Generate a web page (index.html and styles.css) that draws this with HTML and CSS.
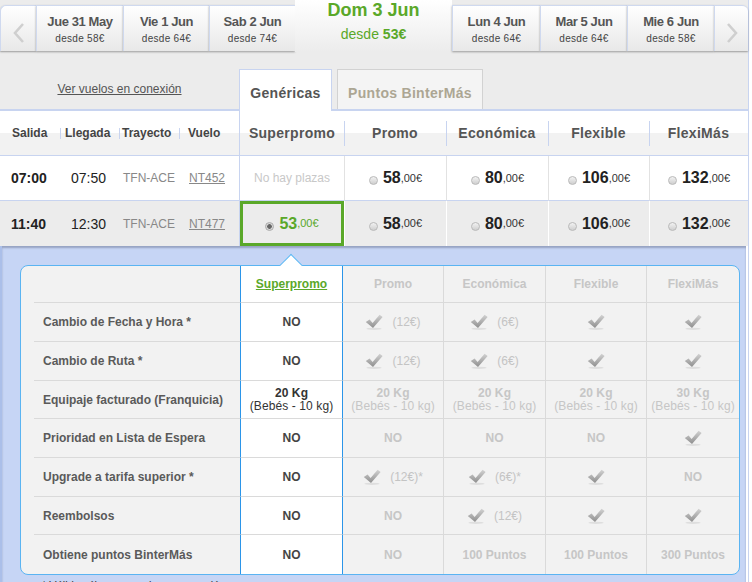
FILE: index.html
```html
<!DOCTYPE html>
<html lang="es">
<head>
  <meta charset="UTF-8">
  <title>Selección de vuelo</title>
  <link rel="stylesheet" href="styles.css">
</head>
<body>

<svg class="defs" width="0" height="0">
  <defs>
    <linearGradient id="gchk" x1="0" y1="0" x2="0" y2="1">
      <stop offset="0" stop-color="#d2d2d2"/>
      <stop offset="1" stop-color="#8e8e8e"/>
    </linearGradient>
    <symbol id="chk" viewBox="0 0 18 16">
      <ellipse cx="9" cy="14.8" rx="7.5" ry="1.1" fill="#dedede"/>
      <path d="M0.8 8 4.6 5.6 7.6 9 14.6 0.8 17.6 3 8 14Z" fill="url(#gchk)"/>
    </symbol>
  </defs>
</svg>

<div class="page">

  <!-- barra de fechas -->
  <div class="dates">
    <div class="arrow prev">
      <svg width="12" height="20" viewBox="0 0 12 20"><polyline points="10,1 2,10 10,19" fill="none" stroke="#cfcfcf" stroke-width="2.6"/></svg>
    </div>
    <div class="day w87"><b>Jue 31 May</b><span>desde 58€</span></div>
    <div class="day w86"><b>Vie 1 Jun</b><span>desde 64€</span></div>
    <div class="day w86"><b>Sab 2 Jun</b><span>desde 74€</span></div>
    <div class="day sel"><b>Dom 3 Jun</b><span>desde <strong>53€</strong></span></div>
    <div class="day w88"><b>Lun 4 Jun</b><span>desde 64€</span></div>
    <div class="day w87"><b>Mar 5 Jun</b><span>desde 64€</span></div>
    <div class="day w87"><b>Mie 6 Jun</b><span>desde 58€</span></div>
    <div class="arrow next">
      <svg width="12" height="20" viewBox="0 0 12 20"><polyline points="2,1 10,10 2,19" fill="none" stroke="#cfcfcf" stroke-width="2.6"/></svg>
    </div>
  </div>

  <!-- pestañas -->
  <div class="tabs">
    <div class="conn"><a href="#">Ver vuelos en conexión</a></div>
    <div class="tab on">Genéricas</div>
    <div class="tab off">Puntos BinterMás</div>
  </div>

  <!-- tabla de vuelos -->
  <div class="fares">
    <div class="hl">
      <div class="lbl l1">Salida</div>
      <div class="lbl l2">Llegada</div>
      <div class="lbl l3">Trayecto</div>
      <div class="lbl l4">Vuelo</div>
    </div>
    <div class="fh first">Superpromo</div>
    <div class="fh">Promo</div>
    <div class="fh">Económica</div>
    <div class="fh">Flexible</div>
    <div class="fh">FlexiMás</div>

    <div class="cell c1"><b class="dep">07:00</b></div>
    <div class="cell c2"><span class="arr">07:50</span></div>
    <div class="cell c3"><span class="route">TFN-ACE</span></div>
    <div class="cell c4"><a href="#" class="fl">NT452</a></div>
    <div class="cell fare first"><span class="none">No hay plazas</span></div>
    <div class="cell fare"><span class="radio"></span><b class="amt">58</b><small>,00€</small></div>
    <div class="cell fare"><span class="radio"></span><b class="amt">80</b><small>,00€</small></div>
    <div class="cell fare"><span class="radio"></span><b class="amt">106</b><small>,00€</small></div>
    <div class="cell fare"><span class="radio"></span><b class="amt">132</b><small>,00€</small></div>

    <div class="cell alt c1"><b class="dep">11:40</b></div>
    <div class="cell alt c2"><span class="arr">12:30</span></div>
    <div class="cell alt c3"><span class="route">TFN-ACE</span></div>
    <div class="cell alt c4"><a href="#" class="fl">NT477</a></div>
    <div class="cell alt fare first chosen"><span class="radio on"></span><b class="amt">53</b><small>,00€</small></div>
    <div class="cell alt fare"><span class="radio"></span><b class="amt">58</b><small>,00€</small></div>
    <div class="cell alt fare"><span class="radio"></span><b class="amt">80</b><small>,00€</small></div>
    <div class="cell alt fare"><span class="radio"></span><b class="amt">106</b><small>,00€</small></div>
    <div class="cell alt fare"><span class="radio"></span><b class="amt">132</b><small>,00€</small></div>
  </div>

  <!-- condiciones de la tarifa -->
  <div class="detail">
    <div class="box">
      <div class="notch"></div>
      <div class="cond">
        <div class="c lab"></div>
        <div class="c sp"><a href="#" class="sp-link">Superpromo</a></div>
        <div class="c hd">Promo</div>
        <div class="c hd">Económica</div>
        <div class="c hd">Flexible</div>
        <div class="c hd last">FlexiMás</div>

        <div class="c lab">Cambio de Fecha y Hora *</div>
        <div class="c sp no">NO</div>
        <div class="c"><svg class="ck"><use href="#chk"/></svg><span class="x">(12€)</span></div>
        <div class="c"><svg class="ck"><use href="#chk"/></svg><span class="x">(6€)</span></div>
        <div class="c"><svg class="ck"><use href="#chk"/></svg></div>
        <div class="c last"><svg class="ck"><use href="#chk"/></svg></div>

        <div class="c lab">Cambio de Ruta *</div>
        <div class="c sp no">NO</div>
        <div class="c"><svg class="ck"><use href="#chk"/></svg><span class="x">(12€)</span></div>
        <div class="c"><svg class="ck"><use href="#chk"/></svg><span class="x">(6€)</span></div>
        <div class="c"><svg class="ck"><use href="#chk"/></svg></div>
        <div class="c last"><svg class="ck"><use href="#chk"/></svg></div>

        <div class="c lab">Equipaje facturado (Franquicia)</div>
        <div class="c sp"><span class="kg"><b>20 Kg</b><br>(Bebés - 10 kg)</span></div>
        <div class="c"><span class="kg"><b>20 Kg</b><br>(Bebés - 10 kg)</span></div>
        <div class="c"><span class="kg"><b>20 Kg</b><br>(Bebés - 10 kg)</span></div>
        <div class="c"><span class="kg"><b>20 Kg</b><br>(Bebés - 10 kg)</span></div>
        <div class="c last"><span class="kg"><b>30 Kg</b><br>(Bebés - 10 kg)</span></div>

        <div class="c lab">Prioridad en Lista de Espera</div>
        <div class="c sp no">NO</div>
        <div class="c no">NO</div>
        <div class="c no">NO</div>
        <div class="c no">NO</div>
        <div class="c last"><svg class="ck"><use href="#chk"/></svg></div>

        <div class="c lab">Upgrade a tarifa superior *</div>
        <div class="c sp no">NO</div>
        <div class="c"><svg class="ck"><use href="#chk"/></svg><span class="x">(12€)*</span></div>
        <div class="c"><svg class="ck"><use href="#chk"/></svg><span class="x">(6€)*</span></div>
        <div class="c"><svg class="ck"><use href="#chk"/></svg></div>
        <div class="c last no">NO</div>

        <div class="c lab">Reembolsos</div>
        <div class="c sp no">NO</div>
        <div class="c no">NO</div>
        <div class="c"><svg class="ck"><use href="#chk"/></svg><span class="x">(12€)</span></div>
        <div class="c"><svg class="ck"><use href="#chk"/></svg></div>
        <div class="c last"><svg class="ck"><use href="#chk"/></svg></div>

        <div class="c lab end">Obtiene puntos BinterMás</div>
        <div class="c sp no end">NO</div>
        <div class="c no end">NO</div>
        <div class="c no end">100 Puntos</div>
        <div class="c no end">100 Puntos</div>
        <div class="c no end last">300 Puntos</div>
      </div>
    </div>
    <p class="note">* Válido sólo para vuelos en conexión</p>
  </div>

</div>

</body>
</html>
```

FILE: styles.css
```css
* { box-sizing: border-box; }
body {
  margin: 0;
  font-family: "Liberation Sans", Arial, sans-serif;
  background: #fff;
  overflow: hidden;
}

.defs { display: block; position: absolute; }

.page {
  width: 749px;
  border-right: 1px solid #c8d4f0;
}

/* fechas */
.dates {
  display: flex;
  align-items: flex-end;
  height: 52px;
  background: #ececec;
}

.day, .arrow {
  height: 46px;
  margin-bottom: 1px;
  background: linear-gradient(#fff, #e8e8e8);
  border-top: 1px solid #cfd9ef;
  border-left: 1px solid #cfd9ef;
  box-shadow: 0 1px 2px rgba(0,0,0,0.35);
  text-align: center;
}

.arrow {
  display: flex;
  justify-content: center;
  padding-top: 17px;
}
.arrow.prev { width: 36px; border-radius: 6px 0 0 0; }
.arrow.next { width: 34px; border-radius: 0 6px 0 0; }

.w86 { width: 86px; }
.w87 { width: 87px; }
.w88 { width: 88px; }

.day b {
  display: block;
  padding-top: 8px;
  font-size: 13px;
  line-height: 16px;
  letter-spacing: -0.4px;
  color: #555;
}
.day span {
  display: block;
  margin-top: 3px;
  font-size: 10px;
  line-height: 12px;
  letter-spacing: 0.3px;
  color: #444;
}

.day.sel {
  width: 157px;
  height: 52px;
  margin-bottom: 0;
  border: none;
  box-shadow: none;
  background: linear-gradient(#fff, #ececec);
}
.day.sel b {
  padding-top: 0;
  font-size: 18px;
  line-height: 20px;
  letter-spacing: 0;
  color: #5aa829;
}
.day.sel span {
  margin-top: 6px;
  font-size: 14px;
  line-height: 16px;
  letter-spacing: 0;
  color: #5aa829;
}

/* pestañas */
.tabs {
  display: flex;
  align-items: flex-end;
  height: 57px;
  background: #ececec;
}
.conn {
  width: 239px;
  padding-bottom: 13px;
  text-align: center;
  font-size: 12px;
  line-height: 14px;
}
.conn a { color: #555; }

.tab {
  position: relative;
  padding-top: 15px;
  text-align: center;
  font-size: 14px;
  font-weight: bold;
  line-height: 17px;
  letter-spacing: 0.3px;
}
.tab.on {
  width: 93px;
  height: 42px;
  margin-bottom: -2px;
  background: #fff;
  border: 1px solid #c8d4f0;
  border-bottom: none;
  color: #555;
}
.tab.off {
  width: 146px;
  height: 40px;
  margin-left: 5px;
  background: #f4f4f4;
  border: 1px solid #d2d2d2;
  border-bottom: none;
  color: #aca693;
}

/* tabla */
.fares {
  display: grid;
  grid-template-columns: 61px 56px 68px 54px 105px 102px 102px 101px 99px;
  background: #fff;
  border-top: 2px solid #c8d4f0;
}

.hl, .fh {
  height: 45px;
  border-bottom: 1px solid #c8d4f0;
  background: linear-gradient(#fff 50%, #f2f2f2 50%);
}
.hl {
  grid-column: span 4;
  display: flex;
  align-items: center;
}
.lbl {
  height: 11px;
  font-size: 12px;
  font-weight: bold;
  line-height: 11px;
  color: #444;
}
.l1 { width: 61px; padding-left: 12px; border-right: 1px solid #c8d4f0; }
.l2 { width: 59px; padding-left: 4px; border-right: 1px solid #c8d4f0; }
.l3 { width: 60px; padding-left: 2px; border-right: 1px solid #c8d4f0; }
.l4 { width: 59px; padding-left: 8px; }

.fh {
  display: flex;
  align-items: center;
  justify-content: center;
  font-size: 14px;
  font-weight: bold;
  letter-spacing: 0.3px;
  color: #555;
  background:
    linear-gradient(#c8d4f0, #c8d4f0) left center / 1px 25px no-repeat,
    linear-gradient(#fff 50%, #f2f2f2 50%);
}
.fh.first {
  border-left: 1px solid #c8d4f0;
  background: linear-gradient(#fff 50%, #f2f2f2 50%);
}

.cell {
  display: flex;
  align-items: center;
  height: 45px;
  background: #fff;
  border-bottom: 1px solid #c8d4f0;
}
.cell.alt {
  background: #ececec;
  border-bottom: none;
}
.c1 { padding-left: 11px; }
.c2 { padding-left: 10px; }
.c3 { padding-left: 6px; }
.c4 { padding-left: 4px; }

.dep { font-size: 14px; color: #222; }
.arr { font-size: 14px; color: #222; }
.route { font-size: 12px; color: #888; }
.fl { font-size: 12px; color: #888; }

.fare {
  justify-content: center;
  border-left: 1px solid #e2e2e2;
}
.fare.alt { border-left-color: #fff; }
.fare.first { border-left-color: #c8d4f0; }

.none { font-size: 12px; color: #c8c8c8; }

.radio {
  display: inline-block;
  width: 9px;
  height: 9px;
  margin-right: 5px;
  margin-top: 5px;
  border: 1px solid #b9b9b9;
  border-radius: 50%;
  background: linear-gradient(#f2f2f2, #cfcfcf);
}
.radio.on {
  background: radial-gradient(circle, #666 0 2px, #d8d8d8 2.6px);
  border-color: #aaa;
}

.amt { font-size: 16px; color: #222; }
.fare small {
  font-size: 11px;
  color: #333;
  margin-bottom: 1px;
}

.chosen {
  background: #fff;
  box-shadow: inset 0 0 0 3px #5aa829;
}
.chosen .amt, .chosen small { color: #5aa829; }

/* condiciones */
.detail {
  width: 746px;
  padding: 19px 0 0 18px;
  height: 336px;
  background: #c6d5f5;
  border-left: 2px solid #abbfe9;
  box-shadow: inset 0 2px 2px rgba(60,70,100,0.35);
}

.box {
  position: relative;
  width: 720px;
  padding-left: 13px;
  background: #f2f2f2;
  border: 1px solid #5ab4f2;
  border-radius: 8px;
}

.notch {
  position: absolute;
  top: -9px;
  left: 262px;
  width: 16px;
  height: 16px;
  background: #fff;
  border-top: 1px solid #5ab4f2;
  border-left: 1px solid #5ab4f2;
  transform: rotate(45deg);
}

.cond {
  display: grid;
  grid-template-columns: 206px 103px 101px 102px 101px 92px;
  grid-template-rows: 37px 39px 39px 38px 39px 39px 38px 39px;
}

.c {
  display: flex;
  align-items: center;
  justify-content: center;
  gap: 9px;
  border-bottom: 1px solid #dadada;
  border-right: 1px solid #dadada;
  font-size: 12px;
  color: #c6c6c6;
  text-align: center;
}
.c.last { border-right: none; }
.c.end { border-bottom: none; }

.c.lab {
  justify-content: flex-start;
  padding-left: 9px;
  border-right: none;
  font-weight: bold;
  color: #5a5a5a;
}

.c.sp {
  background: #fff;
  border-left: 1px solid #2b95e9;
  border-right: 1px solid #2b95e9;
  color: #333;
}

.hd, .no { font-weight: bold; }
.c.sp.no { color: #444; }

.sp-link {
  font-weight: bold;
  color: #5aa829;
}

.ck { width: 18px; height: 16px; }
.x { color: #c4c4c4; }

.kg {
  line-height: 13px;
  letter-spacing: 0.1px;
}

.note {
  margin: 4px 0 0 22px;
  font-size: 11px;
  color: #333;
}
```
